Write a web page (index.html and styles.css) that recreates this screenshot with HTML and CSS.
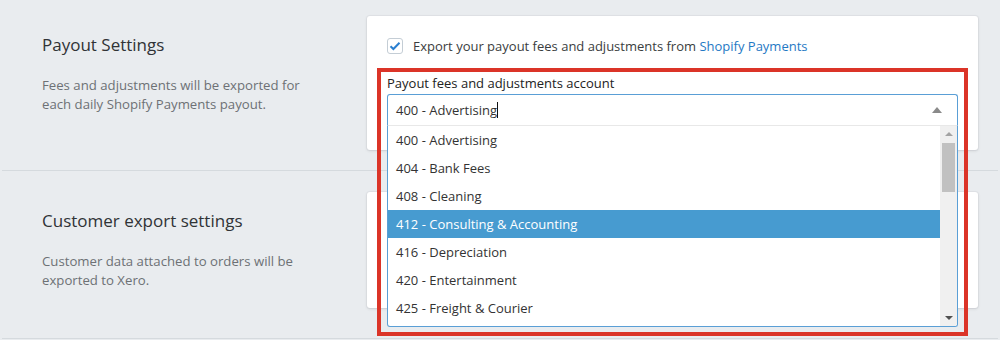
FILE: index.html
```html
<!DOCTYPE html>
<html lang="en">

<head>
    <meta charset="UTF-8">
    <meta name="viewport" content="width=device-width, initial-scale=1.0">
    <title>Export settings</title>
    <link rel="stylesheet" href="styles.css">
</head>

<body>
    <div class="row row-payout">
        <div class="intro">
            <h2 class="intro-title">Payout Settings</h2>
            <p class="intro-text">Fees and adjustments will be exported for<br>each daily Shopify Payments payout.</p>
        </div>
        <div class="card card-payout">
            <label class="check">
                <span class="check-box">
                    <svg width="12" height="10" viewBox="0 0 12 10">
                        <path d="M1.5 5.2 L4.4 8 L10.5 1.8" fill="none" stroke="#2a7fd0" stroke-width="2"/>
                    </svg>
                </span>
                <span>Export your payout fees and adjustments from <a class="link" href="#">Shopify Payments</a></span>
            </label>

            <div class="field">
                <div class="field-label">Payout fees and adjustments account</div>
                <div class="select">
                    <div class="select-current">
                        <span>400 - Advertising</span><span class="cursor"></span>
                        <span class="select-arrow"></span>
                    </div>
                    <div class="dropdown">
                        <ul class="options">
                            <li>400 - Advertising</li>
                            <li>404 - Bank Fees</li>
                            <li>408 - Cleaning</li>
                            <li class="active">412 - Consulting &amp; Accounting</li>
                            <li>416 - Depreciation</li>
                            <li>420 - Entertainment</li>
                            <li>425 - Freight &amp; Courier</li>
                        </ul>
                        <div class="scrollbar">
                            <span class="scroll-up"></span>
                            <span class="scroll-thumb"></span>
                            <span class="scroll-down"></span>
                        </div>
                    </div>
                </div>
            </div>

            <div class="mark"></div>
        </div>
    </div>

    <div class="row row-customer">
        <div class="intro">
            <h2 class="intro-title">Customer export settings</h2>
            <p class="intro-text">Customer data attached to orders will be<br>exported to Xero.</p>
        </div>
        <div class="card card-customer"></div>
    </div>
</body>

</html>
```

FILE: styles.css
```css
body {
    margin: 0;
    background: #e9ecef;
    font-family: "Open Sans", "Noto Sans", sans-serif;
    font-size: 13px;
    color: #333;
    overflow: hidden;
}

.row {
    display: flex;
    border-bottom: 1px solid #d5dade;
    margin: 0 2px;
}

.row-payout {
    padding: 16px 20px 20px 0;
}

.row-customer {
    padding: 21px 20px 30px 0;
}

.intro {
    width: 365px;
    flex-shrink: 0;
    padding: 17px 0 0 40px;
    box-sizing: border-box;
}

.intro-title {
    margin: 0;
    font-size: 17px;
    font-weight: normal;
    line-height: 24px;
    color: #303336;
}

.intro-text {
    margin: 19px 0 0;
    font-size: 13.2px;
    line-height: 19px;
    color: #6d7175;
    white-space: nowrap;
}

.card {
    position: relative;
    width: 611px;
    flex-shrink: 0;
    box-sizing: border-box;
    background: #fff;
    border-radius: 3px;
    box-shadow: 0 0 0 1px rgba(63, 63, 68, .04), 0 1px 3px rgba(63, 63, 68, .15);
}

.card-payout {
    height: 134px;
    padding: 22px 20px 0;
}

.card-customer {
    height: 116px;
}

.check {
    display: flex;
    align-items: center;
    gap: 10px;
    height: 16px;
    color: #3a3d40;
}

.check-box {
    display: flex;
    align-items: center;
    justify-content: center;
    width: 14px;
    height: 14px;
    border: 1px solid #c4cdd5;
    border-radius: 3px;
    background: #fff;
}

.link {
    color: #1f79c4;
    text-decoration: none;
}

.field {
    margin-top: 20px;
}

.field-label {
    line-height: 18px;
    color: #222;
}

.select {
    position: relative;
    margin-top: 2px;
}

.select-current {
    display: flex;
    align-items: center;
    height: 30px;
    padding-left: 8px;
    border: 1px solid #5a9fd6;
    border-bottom: 1px solid #e8e8e8;
    border-radius: 3px 3px 0 0;
    background: #fff;
}

.cursor {
    width: 1px;
    height: 16px;
    background: #111;
}

.select-arrow {
    margin-left: auto;
    margin-right: 15px;
    border-left: 5px solid transparent;
    border-right: 5px solid transparent;
    border-bottom: 6px solid #8a8a8a;
}

.dropdown {
    position: absolute;
    z-index: 2;
    top: 100%;
    left: 0;
    right: 0;
    display: flex;
    height: 200px;
    border: 1px solid #5a9fd6;
    border-top: 0;
    border-radius: 0 0 3px 3px;
    background: #fff;
    overflow: hidden;
}

.options {
    flex: 1;
    margin: 0;
    padding: 0;
    list-style: none;
}

.options li {
    height: 28px;
    line-height: 28px;
    padding-left: 8px;
    color: #333;
}

.options .active {
    background: #479bd0;
    color: #fff;
}

.scrollbar {
    position: relative;
    width: 17px;
    background: #f0f0f0;
}

.scroll-up,
.scroll-down {
    position: absolute;
    left: 5px;
    border-left: 4px solid transparent;
    border-right: 4px solid transparent;
}

.scroll-up {
    top: 6px;
    border-bottom: 4px solid #a3a3a3;
}

.scroll-down {
    bottom: 6px;
    border-top: 4px solid #505050;
}

.scroll-thumb {
    position: absolute;
    top: 17px;
    left: 2px;
    width: 13px;
    height: 49px;
    background: #c1c1c1;
}

.mark {
    position: absolute;
    z-index: 3;
    left: 10px;
    top: 52px;
    width: 583px;
    height: 260px;
    border: 4px solid #db3428;
    pointer-events: none;
}
```
